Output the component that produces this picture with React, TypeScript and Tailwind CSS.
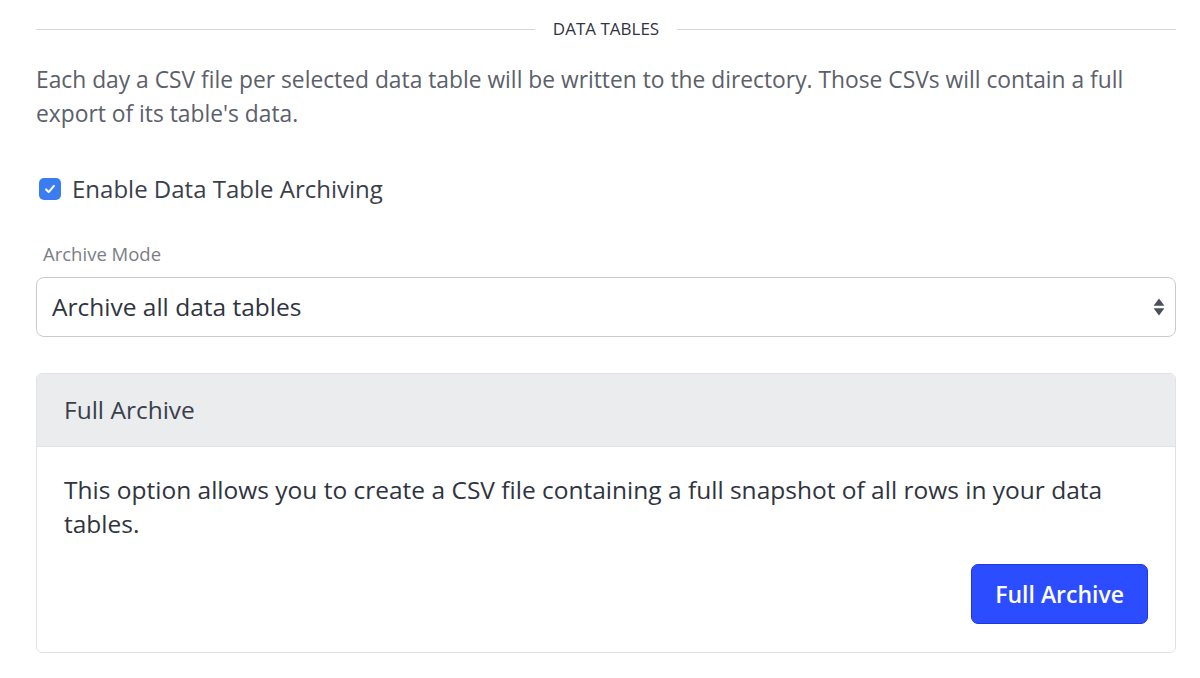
export default function App() {
  return (
    <div className="min-h-screen bg-white pl-9 pr-6 pt-[16px] text-[#3a3f4b]" style={{ fontFamily: '"Open Sans", "Noto Sans", sans-serif' }}>
      {/* Section divider */}
      <div className="flex items-center gap-[18px]">
        <div className="h-px flex-1 bg-[#d4d6da]" />
        <span className="text-[17px] leading-[26px] text-[#2f3440]">DATA TABLES</span>
        <div className="h-px flex-1 bg-[#d4d6da]" />
      </div>

      <p className="mt-[21px] max-w-[1100px] text-[22.8px] leading-[34px] text-[#5b606a]">
        Each day a CSV file per selected data table will be written to the directory. Those CSVs will contain a full export of its table's data.
      </p>

      {/* Checkbox */}
      <label className="mt-[41px] flex items-center gap-[11px]">
        <span className="ml-[3px] flex h-[22px] w-[22px] items-center justify-center rounded-[5px] bg-[#3b7cf0]">
          <svg viewBox="0 0 16 16" className="h-[14px] w-[14px]" fill="none" stroke="white" strokeWidth="2.4" strokeLinecap="round" strokeLinejoin="round">
            <path d="M3.5 8.5l3 3 6-7" />
          </svg>
        </span>
        <span className="text-[24px] leading-[34px] text-[#3a3f4b]">Enable Data Table Archiving</span>
      </label>

      {/* Archive mode select */}
      <div className="mt-[35px] pl-[7px] text-[18.5px] leading-[26px] text-[#7a7e86]">Archive Mode</div>
      <div className="mt-[10px] flex h-[60px] items-center justify-between rounded-[8px] border border-[#c9cbcf] pl-[15px] pr-[10px]">
        <span className="text-[24.5px] text-[#2f3440]">Archive all data tables</span>
        <svg viewBox="0 0 10 16" className="h-[22px] w-[12px]" fill="#4a4f5a">
          <path d="M5 1L9.5 7H0.5Z" />
          <path d="M5 15L9.5 9H0.5Z" />
        </svg>
      </div>

      {/* Card */}
      <div className="mt-[36px] overflow-hidden rounded-[6px] border border-[#e0e2e5]">
        <div className="flex h-[73px] items-center border-b border-[#e0e2e5] bg-[#ebecee] px-[27px]">
          <span className="text-[24.5px] text-[#3a3f4b]">Full Archive</span>
        </div>
        <div className="px-[27px] pb-[28px] pt-[26px]">
          <p className="text-[24.5px] leading-[34px] text-[#2f3440]">
            This option allows you to create a CSV file containing a full snapshot of all rows in your data tables.
          </p>
          <div className="mt-[23px] flex justify-end">
            <button className="h-[60px] rounded-[7px] border border-[#1f38dd] bg-[#2c4cff] px-[23px] text-[23px] font-semibold text-white">
              Full Archive
            </button>
          </div>
        </div>
      </div>
    </div>
  )
}
